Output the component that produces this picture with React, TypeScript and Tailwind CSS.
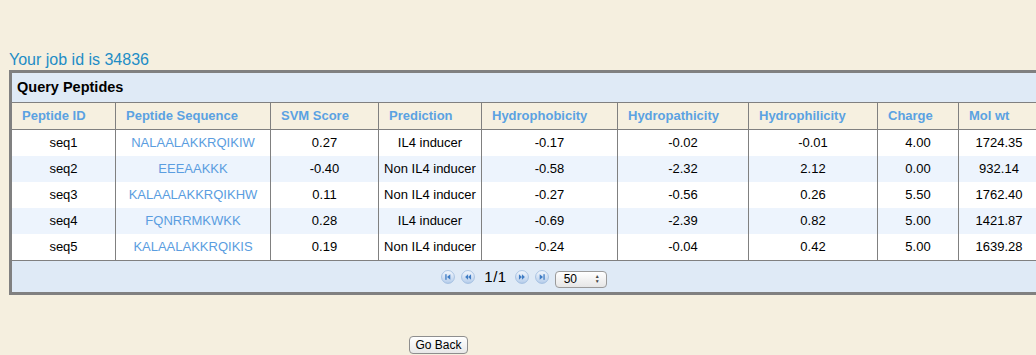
import React from "react";

const cols = ["104px", "155px", "108px", "103px", "136px", "131px", "129px", "81px", "81px", "100px"];

const headers = [
  "Peptide ID",
  "Peptide Sequence",
  "SVM Score",
  "Prediction",
  "Hydrophobicity",
  "Hydropathicity",
  "Hydrophilicity",
  "Charge",
  "Mol wt",
  "",
];

const rows = [
  ["seq1", "NALAALAKKRQIKIW", "0.27", "IL4 inducer", "-0.17", "-0.02", "-0.01", "4.00", "1724.35", ""],
  ["seq2", "EEEAAKKK", "-0.40", "Non IL4 inducer", "-0.58", "-2.32", "2.12", "0.00", "932.14", ""],
  ["seq3", "KALAALAKKRQIKHW", "0.11", "Non IL4 inducer", "-0.27", "-0.56", "0.26", "5.50", "1762.40", ""],
  ["seq4", "FQNRRMKWKK", "0.28", "IL4 inducer", "-0.69", "-2.39", "0.82", "5.00", "1421.87", ""],
  ["seq5", "KALAALAKKRQIKIS", "0.19", "Non IL4 inducer", "-0.24", "-0.04", "0.42", "5.00", "1639.28", ""],
];

function PagerIcon({ kind }: { kind: "first" | "prev" | "next" | "last" }) {
  const glyph = {
    first: (
      <>
        <rect x="4.6" y="4.5" width="1.4" height="6" />
        <path d="M10 4.5 L6.4 7.5 L10 10.5 Z" />
      </>
    ),
    prev: (
      <>
        <path d="M7.6 4.6 L4.4 7.5 L7.6 10.4 Z" />
        <path d="M10.8 4.6 L7.6 7.5 L10.8 10.4 Z" />
      </>
    ),
    next: (
      <>
        <path d="M4.2 4.6 L7.4 7.5 L4.2 10.4 Z" />
        <path d="M7.4 4.6 L10.6 7.5 L7.4 10.4 Z" />
      </>
    ),
    last: (
      <>
        <path d="M5 4.5 L8.6 7.5 L5 10.5 Z" />
        <rect x="9" y="4.5" width="1.4" height="6" />
      </>
    ),
  }[kind];
  return (
    <svg width="14" height="14" viewBox="0 0 15 15" className="shrink-0">
      <defs>
        <linearGradient id={`g-${kind}`} x1="0" y1="0" x2="0" y2="1">
          <stop offset="0" stopColor="#f4f8fd" />
          <stop offset="1" stopColor="#b4ccea" />
        </linearGradient>
      </defs>
      <circle cx="7.5" cy="7.5" r="6.9" fill={`url(#g-${kind})`} stroke="#98b6dc" strokeWidth="0.8" />
      <g fill="#3f7cc4">{glyph}</g>
    </svg>
  );
}

export default function App() {
  return (
    <div className="w-[1036px] h-[355px] overflow-hidden bg-[#f5efdf] font-['Liberation_Sans',Arial,sans-serif] text-black">
      <div className="pt-[51px] pl-[9px]">
        <div className="text-[16px] leading-[18px] text-[#1e8dc6]">Your job id is 34836</div>

        <div className="mt-[1px] w-[1190px] border-[3px] border-[#808080] bg-[#dfeaf6]">
          <div className="h-[30px] flex items-center pl-[5px] text-[14.5px] font-bold border-b border-[#808080]">
            Query Peptides
          </div>

          <div
            className="grid bg-[#f6f0e0] h-[27px] border-b border-[#808080]"
            style={{ gridTemplateColumns: cols.join(" ") }}
          >
            {headers.map((h, j) => (
              <div
                key={j}
                className="flex items-center pl-[10px] border-r border-[#808080] text-[13px] font-bold text-[#5ba2e2]"
              >
                {h}
              </div>
            ))}
          </div>

          {rows.map((r, i) => (
            <div
              key={r[0]}
              className={`grid ${i % 2 === 0 ? "bg-white" : "bg-[#edf4fd]"} ${
                i === rows.length - 1 ? "border-b border-[#808080] h-[27px]" : "h-[26px]"
              }`}
              style={{ gridTemplateColumns: cols.join(" ") }}
            >
              {r.map((c, j) => (
                <div
                  key={j}
                  className={`flex items-center justify-center border-r border-[#808080] text-[13px] ${
                    j === 1 ? "text-[#5a9de0]" : "text-black"
                  }`}
                >
                  {c}
                </div>
              ))}
            </div>
          ))}

          <div className="h-[31px] w-[1024px] flex items-center justify-center">
            <PagerIcon kind="first" />
            <span className="ml-[6px]">
              <PagerIcon kind="prev" />
            </span>
            <span className="ml-[9px] mr-[8px] text-[15px] leading-none tracking-[0.5px]">1/1</span>
            <PagerIcon kind="next" />
            <span className="ml-[6px]">
              <PagerIcon kind="last" />
            </span>
            <div className="ml-[6px] mt-[5px] w-[52px] h-[17px] flex items-center justify-between pl-[8px] pr-[6px] rounded-[4px] border border-[#9a9a9a] bg-gradient-to-b from-white to-[#e6e6e6] text-[12px]">
              <span>50</span>
              <span className="flex flex-col items-center leading-none text-[5px] text-[#444]">
                <span>▲</span>
                <span>▼</span>
              </span>
            </div>
          </div>
        </div>

        <div className="pt-[37px] pl-[400px]">
          <button className="w-[59px] h-[18px] rounded-[4px] border border-[#8e8e8e] bg-gradient-to-b from-white to-[#e8e8e8] text-[12px] leading-none text-black">
            Go Back
          </button>
        </div>
      </div>
    </div>
  );
}
